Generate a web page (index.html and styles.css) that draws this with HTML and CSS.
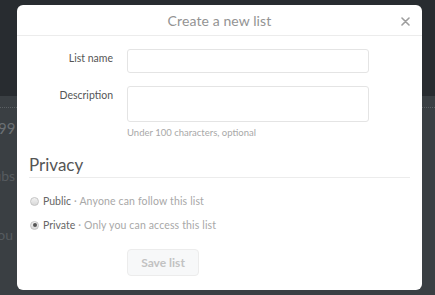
FILE: index.html
```html
<!DOCTYPE html>
<html>
<head>
<meta charset="utf-8">
<link rel="stylesheet" href="styles.css">
</head>
<body>
<div class="page">
  <div class="topbar"></div>
  <div class="content">
    <div class="rule"></div>
    <div class="bg-num">99</div>
    <div class="bg-text t1">Subs</div>
    <div class="bg-text t2">You</div>
  </div>
</div>
<div class="modal">
  <div class="modal-head">
    <span class="title">Create a new list</span>
    <svg class="close" width="9" height="9" viewBox="0 0 9 9"><path d="M1 1L8 8M8 1L1 8" stroke="#9e9e9e" stroke-width="1.6" stroke-linecap="round"/></svg>
  </div>
  <div class="modal-body">
    <div class="row">
      <label class="lbl">List name</label>
      <div class="field"><input class="input" type="text"></div>
    </div>
    <div class="row row-desc">
      <label class="lbl">Description</label>
      <div class="field">
        <textarea class="textarea"></textarea>
        <div class="hint">Under 100 characters, optional</div>
      </div>
    </div>
    <h3 class="privacy">Privacy</h3>
    <div class="radios">
      <div class="radio-row"><span class="radio"></span><span class="opt">Public</span><span class="desc">&middot; Anyone can follow this list</span></div>
      <div class="radio-row"><span class="radio checked"></span><span class="opt">Private</span><span class="desc">&middot; Only you can access this list</span></div>
    </div>
    <div class="actions">
      <button class="btn">Save list</button>
    </div>
  </div>
</div>
</body>
</html>
```
FILE: styles.css
```css
html, body { margin: 0; padding: 0; }
body {
  width: 435px; height: 295px; overflow: hidden;
  background: #3a3f43;
  font-family: Lato, "Open Sans", sans-serif;
  position: relative;
}
.page { height: 295px; }
.topbar { height: 96px; background: #282c30; }
.content { padding-top: 11px; }
.rule { height: 1px; border-top: 1px dotted #5a5f63; }
.bg-num { color: #6b7074; font-size: 15px; margin: 10px 0 0 -2px; }
.bg-text { color: #565b5f; font-size: 14px; margin-left: -14px; }
.t1 { margin-top: 30px; }
.t2 { margin-top: 42px; margin-left: -10px; }

.modal {
  position: absolute; left: 17px; top: 5px;
  width: 405px; height: 285px;
  background: #fff; border-radius: 6px;
  box-sizing: border-box;
}
.modal-head {
  height: 30px; border-bottom: 1px solid #ececec;
  display: flex; align-items: center; justify-content: center;
  position: relative;
}
.title { color: #939393; font-size: 14px; letter-spacing: 0.1px; }
.close { position: absolute; right: 12px; top: 12px; }
.modal-body { padding: 13px 12px 0 12px; }
.row { display: grid; grid-template-columns: 84px 242px; column-gap: 14px; }
.row-desc { margin-top: 13px; }
.lbl { text-align: right; color: #555; font-size: 10.5px; padding-top: 3px; }
.input, .textarea {
  display: block; box-sizing: border-box; width: 242px;
  border: 1px solid #e4e4e4; border-radius: 3px; background: #fff;
  margin: 0; padding: 0; font: inherit; resize: none;
}
.input { height: 24px; }
.textarea { height: 36px; }
.hint { color: #a8a8a8; font-size: 9.5px; margin-top: 5px; }
.privacy {
  margin: 16px 0 0 0; font-weight: normal; color: #555;
  font-size: 17px; padding-bottom: 2px; border-bottom: 1px solid #ececec;
}
.radios { padding-top: 11px; }
.radio-row { display: flex; align-items: center; height: 24px; font-size: 10.5px; }
.radio {
  width: 9px; height: 9px; border-radius: 50%; box-sizing: border-box;
  border: 1px solid #c4c4c4; background: linear-gradient(#f2f2f2, #d8d8d8);
  margin: 0 4px 0 1px; position: relative;
}
.radio.checked::after {
  content: ""; position: absolute; left: 1.5px; top: 1.5px;
  width: 4px; height: 4px; border-radius: 50%; background: #555;
}
.opt { color: #666; margin-right: 3px; }
.desc { color: #a8a8a8; letter-spacing: 0.15px; }
.actions { padding: 12px 0 0 98px; }
.btn {
  width: 72px; height: 27px; box-sizing: border-box;
  border: 1px solid #ececec; border-radius: 4px; background: #f7f8f9;
  color: #c2c2c2; font-family: inherit; font-weight: bold; font-size: 12px;
  padding: 0;
}
```
